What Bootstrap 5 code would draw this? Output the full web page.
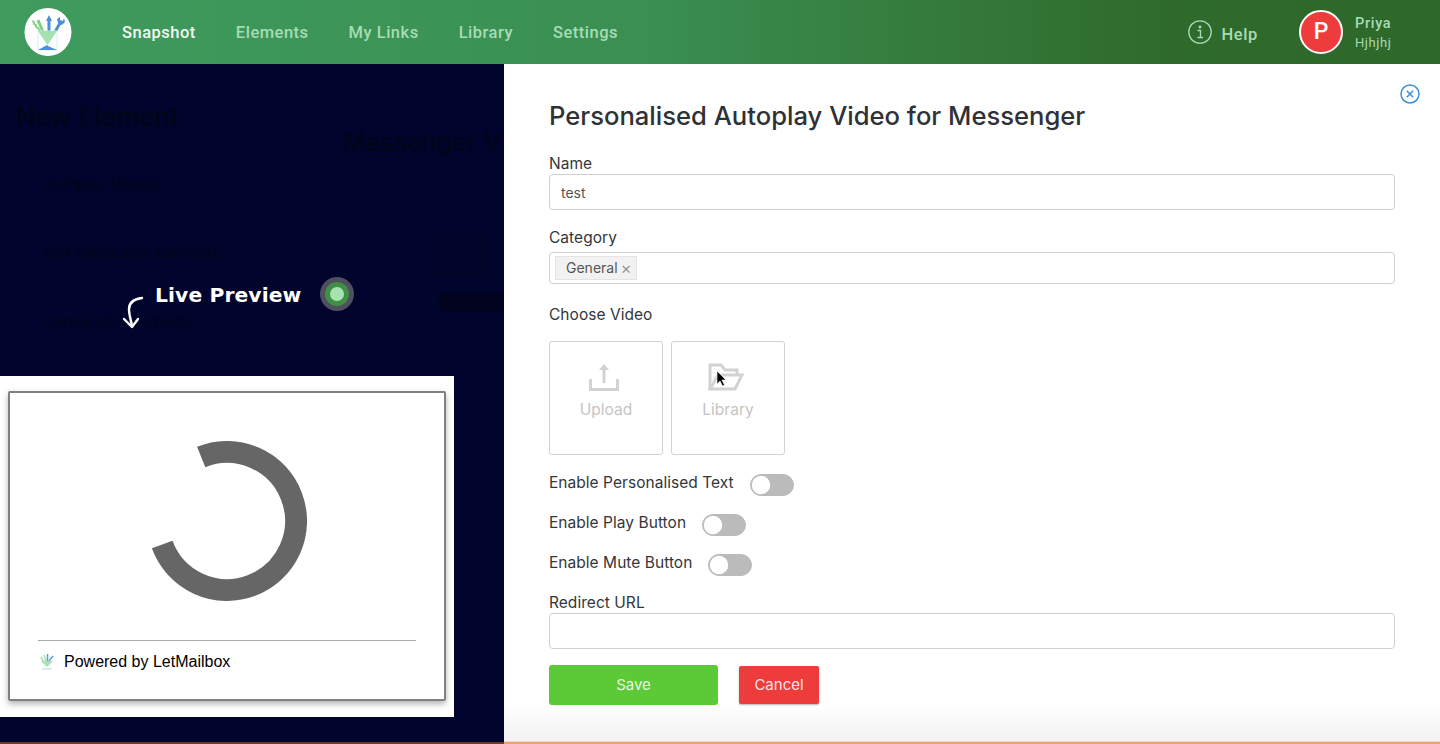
<!DOCTYPE html>
<html lang="en">
<head>
  <meta charset="UTF-8">
  <title>Personalised Autoplay Video for Messenger</title>
  <link href="https://cdn.jsdelivr.net/npm/bootstrap@5.3.3/dist/css/bootstrap.min.css" rel="stylesheet">
  <style>
    body { height: 744px; overflow: hidden; font-family: Inter, "Liberation Sans", sans-serif; color: #33363a; }
    .top-bar { height: 64px; padding: 0 0 0 24px; background: linear-gradient(90deg, #3f9c5e 0%, #3a8f52 45%, #2f6b2c 80%, #2e682a 100%); font-family: Roboto, sans-serif; }
    .top-logo { width: 48px; height: 48px; margin-right: 50px; }
    .top-nav { gap: 40px; }
    .top-nav .nav-link { padding: 2px 0 0; font-size: 16.5px; font-weight: 500; letter-spacing: .5px; color: #a6dcb4; }
    .top-nav .nav-link.active { color: #f2f8f3; }
    .help-link { color: #a6dcb4; font-size: 16.5px; font-weight: 500; letter-spacing: .6px; gap: 10px; margin-right: 41px; }
    .help-link span { margin-top: 6px; }
    .avatar-dot { width: 44px; height: 44px; border: 2px solid #fff; background: #ee3c3c; color: #fff; font-size: 23px; font-weight: 500; }
    .user-box { width: 85px; color: #a6dcb4; margin: 2px 0 0 12px; line-height: 1; }
    .user-name { font-size: 14.5px; font-weight: 500; letter-spacing: .7px; margin-bottom: 5px; }
    .user-sub { font-size: 13px; letter-spacing: .6px; }
    .work-area { height: 680px; }
    .dark-side { width: 504px; background: #01052e; color: #020418; overflow: hidden; border-bottom: 2px solid #6b3c22; }
    .ghost-left { width: 297px; flex-shrink: 0; padding: 37px 0 0 16px; }
    .ghost-left h2 { font-size: 26px; font-weight: 500; margin-bottom: 42px; white-space: nowrap; }
    .ghost-left p { font-size: 15px; line-height: 20px; margin: 0 0 49px 28px; white-space: nowrap; }
    .ghost-right { padding: 63px 0 0 46px; white-space: nowrap; }
    .ghost-right h2 { font-size: 25px; font-weight: 500; margin-bottom: 74px; }
    .ghost-pill { width: 66px; height: 19px; border-radius: 9px 0 0 9px; background: #02041f; margin: 16px 0 0 95px; }
    .ghost-box { width: 62px; height: 46px; background: #02042a; margin-left: 85px; }
    .live-label { left: 122px; top: 213px; color: #fff; }
    .live-arrow { margin-top: 19px; }
    .live-text { font-family: "DejaVu Sans", sans-serif; font-size: 20.3px; font-weight: 700; letter-spacing: .1px; margin: 3px 19px 0 9px; line-height: 30px; }
    .live-dot { width: 34px; height: 34px; background: #4f4f5f; padding: 5px; }
    .live-dot span { width: 24px; height: 24px; background: #3f9045; }
    .live-dot i { width: 14px; height: 14px; background: #a6e3b0; border-radius: 50%; }
    .preview-wrap { left: 0; bottom: 25px; width: 454px; height: 341px; background: #fff; padding: 15px 8px 16px 8px; }
    .preview-frame { height: 310px; border: 2px solid #808080; border-radius: 2px; box-shadow: 0 3px 6px rgba(0,0,0,.3); padding: 48px 28px 0; color: #000; }
    .preview-foot { border-top: 1px solid #aaa; margin-top: 39px; padding-top: 9px; font-family: "Liberation Sans", sans-serif; font-size: 16px; gap: 8px; }
    .form-side { flex: 1; background: linear-gradient(180deg, #fff 94%, #f2f2f2 99.6%, #e9a36f 99.7%); padding: 35px 45px 0; }
    .close-btn { right: 20px; top: 20px; line-height: 0; }
    .form-title { font-size: 25.6px; font-weight: 500; color: #2e3136; margin-bottom: 22px; line-height: 33px; }
    .field-label { font-size: 15.5px; font-weight: 400; letter-spacing: .04px; color: #33363a; line-height: 20px; margin-bottom: 0; display: block; }
    .field-input { height: 36px; border: 1px solid #cfcfcf; border-radius: 4px; font-size: 14px; color: #555; padding: 0 11px; }
    .category-label { margin: 18px 0 4px; }
    .tag-box { height: 32px; border: 1px solid #cfcfcf; border-radius: 4px; padding: 3px 5px; }
    .tag-item { background: #f2f2f2; border: 1px solid #e4e4e4; font-size: 14px; color: #555; padding: 0 4px 0 10px; gap: 3px; line-height: 22px; }
    .tag-x { color: #888; font-size: 17px; font-weight: 300; line-height: 20px; }
    .choose-label { margin: 21px 0 16px; }
    .pick-tile { width: 114px; height: 114px; border: 1px solid #d3d3d3; border-radius: 3px; color: #c4c4c4; font-size: 15.5px; padding-top: 21px; gap: 7px; }
    .pick-tile svg:first-child { margin-right: 4px; }
    .pick-cursor { left: 44px; top: 28px; }
    .switch-list { margin-top: 9px; }
    .switch-row { height: 40px; gap: 16px; padding-left: 0; margin: 0; }
    .switch-row .field-label { margin: 0 0 3px; }
    .switch-row.form-switch .form-check-input { width: 44px; height: 22px; margin: 1px 0 0; float: none; border: 1px solid #bbb; background-color: #bbb; background-image: url("data:image/svg+xml,<svg xmlns='http://www.w3.org/2000/svg' viewBox='-4 -4 8 8'><circle r='3.7' fill='%23fff'/></svg>"); }
    .redirect-label { margin: 9px 0 0; }
    .button-row { margin-top: 16px; }
    .save-btn { width: 169px; height: 40px; background: #5cc936; border: 0; border-radius: 3px; color: #e6f7de; font-size: 15px; }
    .cancel-btn { width: 80px; height: 38px; background: #ee3c3c; border: 0; border-radius: 2px; color: #fbe3e3; font-size: 15px; margin-left: 21px; box-shadow: 0 1px 2px rgba(0,0,0,.3); }
  </style>
</head>
<body>

  <!-- header -->
  <nav class="top-bar d-flex align-items-center">
    <svg class="top-logo" viewBox="0 0 48 48">
      <ellipse cx="24" cy="24" rx="23.500" ry="24" fill="#fff"/>
      <path d="M8 13l2 1 0 2 2 1 0 2 2 1 2 3" stroke="#7fd07f" stroke-width="1.800" fill="none"/>
      <path d="M14 12l5 12" stroke="#7fd07f" stroke-width="3" fill="none"/>
      <path d="M25 24V11" stroke="#4a90d9" stroke-width="3"/>
      <path d="M22 13l3-6 3 6z" fill="#4a90d9"/>
      <path d="M31 24l5-9" stroke="#4a90d9" stroke-width="3"/>
      <path d="M34 15l-1-4 3-2v3l3 1 1-3 1 4-3 3z" fill="#4a90d9"/>
      <path d="M14 23h19v19H14z" fill="#fff" stroke="#d6edf6"/>
      <path d="M14 23h19l-9.500 14z" fill="#a5e2b0"/>
      <path d="M14 42l9-5 1 1 9 4z" fill="#4a90d9"/>
    </svg>
    <div class="nav top-nav">
      <a class="nav-link active" href="#">Snapshot</a>
      <a class="nav-link" href="#">Elements</a>
      <a class="nav-link" href="#">My Links</a>
      <a class="nav-link" href="#">Library</a>
      <a class="nav-link" href="#">Settings</a>
    </div>
    <div class="help-link d-flex align-items-center ms-auto">
      <svg width="24" height="24" viewBox="0 0 24 24" fill="none" stroke="#a6dcb4" stroke-width="1.300">
        <circle cx="12" cy="12" r="11.200"/>
        <path d="M9.500 10.500H12.500V17.500M9.500 17.500H15" />
        <circle cx="12" cy="7" r=".8" fill="#a6dcb4"/>
      </svg>
      <span>Help</span>
    </div>
    <div class="avatar-dot rounded-circle d-flex align-items-center justify-content-center">P</div>
    <div class="user-box">
      <div class="user-name">Priya</div>
      <div class="user-sub">Hjhjhj</div>
    </div>
  </nav>

  <div class="work-area d-flex">
    <!-- dimmed page and live preview -->
    <div class="dark-side position-relative d-flex">
      <div class="ghost-left">
        <h2>New Element</h2>
        <p>Autoplay Videos</p>
        <p>Self Interaction Elements</p>
        <p>Conversion Elements</p>
      </div>
      <div class="ghost-right">
        <h2>Messenger V</h2>
        <div class="ghost-box"></div>
        <div class="ghost-pill"></div>
      </div>

      <div class="live-label position-absolute d-flex align-items-start">
        <svg width="24" height="36" viewBox="0 0 24 36" fill="none" stroke="#fff" stroke-width="2.400" stroke-linecap="round" stroke-linejoin="round" class="live-arrow">
          <path d="M20 2C12 3 7 6 7 13c0 6 2 11 3 17"/>
          <path d="M2 23l8 8 6-8"/>
        </svg>
        <span class="live-text">Live Preview</span>
        <span class="live-dot rounded-circle d-flex">
          <span class="rounded-circle d-flex align-items-center justify-content-center"><i></i></span>
        </span>
      </div>

      <div class="preview-wrap position-absolute">
        <div class="preview-frame">
          <div class="text-center">
            <svg width="160" height="160" viewBox="0 0 160 160" fill="none">
              <path d="M54.200 16A69 69 0 1 1 15.200 103.600" stroke="#666" stroke-width="22"/>
            </svg>
          </div>
          <div class="preview-foot d-flex align-items-center">
            <svg width="18" height="20" viewBox="0 0 18 20" fill="none">
              <path d="M3 5l3 5M6 3l2 6" stroke="#a5e2b0" stroke-width="1.500"/>
              <path d="M9.500 2v8M11 9l4-5" stroke="#5aa0e0" stroke-width="1.500"/>
              <path d="M3 9h12l-6 6z" fill="#a5e2b0"/>
              <path d="M4 16h10v2H4z" fill="#d6edf6"/>
            </svg>
            <span>Powered by LetMailbox</span>
          </div>
        </div>
      </div>
    </div>

    <!-- form panel -->
    <div class="form-side position-relative">
      <a class="close-btn position-absolute" href="#">
        <svg width="20" height="20" viewBox="0 0 20 20" fill="none" stroke="#3d8fd6" stroke-width="1.500">
          <circle cx="10" cy="10" r="9"/>
          <path d="M6.800 6.800l6.400 6.400M13.200 6.800l-6.400 6.400"/>
        </svg>
      </a>
      <h1 class="form-title">Personalised Autoplay Video for Messenger</h1>
      <form>
        <label class="field-label">Name</label>
        <input class="form-control field-input" type="text" value="test">

        <label class="field-label category-label">Category</label>
        <div class="tag-box d-flex">
          <span class="tag-item d-inline-flex align-items-center">General <span class="tag-x">&#215;</span></span>
        </div>

        <label class="field-label choose-label">Choose Video</label>
        <div class="d-flex gap-2">
          <div class="pick-tile d-flex flex-column align-items-center">
            <svg width="30" height="28" viewBox="0 0 30 28" fill="none" stroke="#d2d2d2" stroke-width="3">
              <path d="M15 20V6"/>
              <path d="M15 1l5 6H10z" fill="#d2d2d2" stroke="none"/>
              <path d="M1.500 16v10.500h27V16"/>
            </svg>
            <span>Upload</span>
          </div>
          <div class="pick-tile d-flex flex-column align-items-center position-relative">
            <svg width="36" height="28" viewBox="0 0 36 28" fill="none" stroke="#d2d2d2" stroke-width="3">
              <path d="M2 26V2h11l4 5h12v5"/>
              <path d="M2 26h25l7-14H10L2 26z"/>
            </svg>
            <span>Library</span>
            <svg class="pick-cursor position-absolute" width="12" height="18" viewBox="0 0 12 18">
              <path d="M1 1v13l3-3 2.500 5 2-1-2.500-5h4z" fill="#000" stroke="#fff" stroke-width=".6"/>
            </svg>
          </div>
        </div>

        <div class="switch-list">
          <div class="switch-row form-switch d-flex align-items-center">
            <label class="field-label">Enable Personalised Text</label>
            <input class="form-check-input" type="checkbox" role="switch">
          </div>
          <div class="switch-row form-switch d-flex align-items-center">
            <label class="field-label">Enable Play Button</label>
            <input class="form-check-input" type="checkbox" role="switch">
          </div>
          <div class="switch-row form-switch d-flex align-items-center">
            <label class="field-label">Enable Mute Button</label>
            <input class="form-check-input" type="checkbox" role="switch">
          </div>
        </div>

        <label class="field-label redirect-label">Redirect URL</label>
        <input class="form-control field-input" type="text">

        <div class="d-flex align-items-center button-row">
          <button type="button" class="btn save-btn">Save</button>
          <button type="button" class="btn cancel-btn">Cancel</button>
        </div>
      </form>
    </div>
  </div>

  <script src="https://cdn.jsdelivr.net/npm/bootstrap@5.3.3/dist/js/bootstrap.bundle.min.js"></script>
</body>
</html>
